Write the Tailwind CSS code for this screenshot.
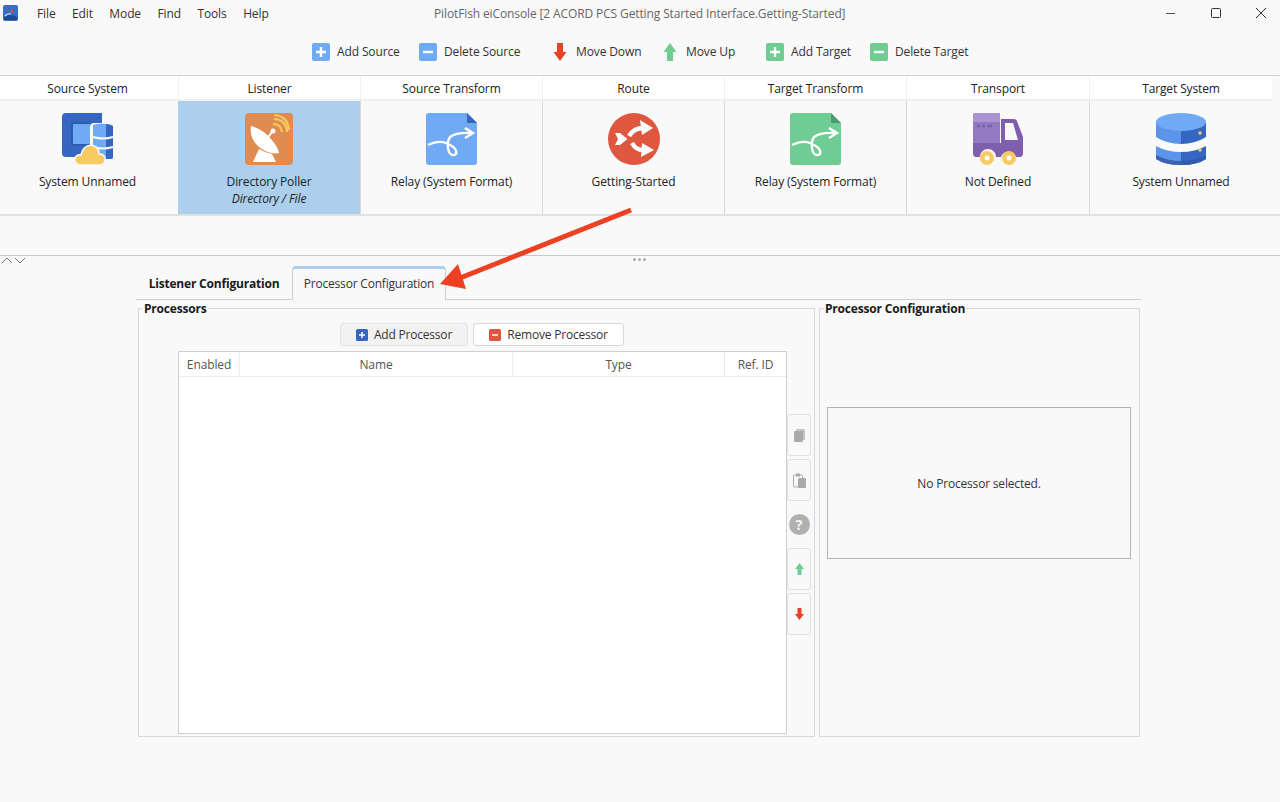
<!DOCTYPE html>
<html lang="en">
<head>
  <meta charset="UTF-8">
  <title>PilotFish eiConsole</title>
  <script src="https://cdn.jsdelivr.net/npm/@tailwindcss/browser@4"></script>
</head>
<body class="relative h-[802px] w-[1280px] overflow-hidden bg-[#f9f9f9] font-['Open_Sans','Noto_Sans',sans-serif] text-[12px] tracking-[-0.12px] text-[#222]">

  <!-- title bar -->
  <div class="relative flex h-[26px] items-center">
    <svg class="ml-[3px] h-[16px] w-[15px]" viewBox="0 0 15 16">
      <rect width="15" height="16" rx="2" fill="#3a6ec0"/>
      <path d="M1 12 Q7 8 14 12 V15 H1 Z" fill="#1f4a96"/>
      <path d="M2 11 Q5 8 8 9" stroke="#d8e6f8" stroke-width="1.2" fill="none"/>
      <path d="M8 3 L11 7 L8 8 Z" fill="#d9503f"/>
    </svg>
    <nav class="ml-[19px] flex gap-[16.5px] pt-[1px] text-[#333]">
      <span>File</span><span>Edit</span><span>Mode</span><span>Find</span><span>Tools</span><span>Help</span>
    </nav>
    <div class="absolute left-[434px] w-[410px] whitespace-nowrap pt-[1px] text-center text-[#666]">PilotFish eiConsole [2 ACORD PCS Getting Started Interface.Getting-Started]</div>
    <div class="ml-auto mr-[13px] flex items-center gap-[33px]">
      <svg class="h-[12px] w-[12px]" viewBox="0 0 12 12"><path d="M1 6.5H10" stroke="#555" stroke-width="1"/></svg>
      <svg class="h-[12px] w-[12px]" viewBox="0 0 12 12"><rect x="1.5" y="1.5" width="9" height="9" rx="1" stroke="#333" fill="none"/></svg>
      <svg class="h-[12px] w-[12px]" viewBox="0 0 12 12"><path d="M1 1L11 11M11 1L1 11" stroke="#333" stroke-width="1"/></svg>
    </div>
  </div>

  <!-- toolbar -->
  <div class="flex h-[49px] items-center pl-[312px] pt-[3px] text-[#333]">
    <div class="flex w-[107px] items-center gap-[7px]">
      <svg class="h-[18px] w-[18px]" viewBox="0 0 18 18"><rect width="18" height="18" rx="2" fill="#70aaf5"/><path d="M9 4V14M4 9H14" stroke="#fff" stroke-width="2.4"/></svg>
      <span>Add Source</span>
    </div>
    <div class="flex w-[134px] items-center gap-[7px]">
      <svg class="h-[18px] w-[18px]" viewBox="0 0 18 18"><rect width="18" height="18" rx="2" fill="#70aaf5"/><path d="M4 9H14" stroke="#fff" stroke-width="2.4"/></svg>
      <span>Delete Source</span>
    </div>
    <div class="flex w-[110px] items-center gap-[9px]">
      <svg class="h-[18px] w-[14px]" viewBox="0 0 14 18"><path d="M4 0.5Q4 0 4.5 0H9.5Q10 0 10 0.5V9H13.5L7 18L0.5 9H4Z" fill="#e8412a"/></svg>
      <span>Move Down</span>
    </div>
    <div class="flex w-[103px] items-center gap-[9px]">
      <svg class="h-[18px] w-[14px]" viewBox="0 0 14 18"><path d="M4 17.5Q4 18 4.5 18H9.5Q10 18 10 17.5V9H13.5L7 0L0.5 9H4Z" fill="#6fcc92"/></svg>
      <span>Move Up</span>
    </div>
    <div class="flex w-[104px] items-center gap-[7px]">
      <svg class="h-[18px] w-[18px]" viewBox="0 0 18 18"><rect width="18" height="18" rx="2" fill="#6fcc92"/><path d="M9 4V14M4 9H14" stroke="#fff" stroke-width="2.4"/></svg>
      <span>Add Target</span>
    </div>
    <div class="flex items-center gap-[7px]">
      <svg class="h-[18px] w-[18px]" viewBox="0 0 18 18"><rect width="18" height="18" rx="2" fill="#6fcc92"/><path d="M4 9H14" stroke="#fff" stroke-width="2.4"/></svg>
      <span>Delete Target</span>
    </div>
  </div>

  <!-- stage grid -->
  <div class="w-[1280px] border-t border-[#d0d0d0]">
    <div class="grid w-[1272px] grid-cols-[178px_182px_182px_182px_182px_183px_183px]">
      <div class="flex h-[25px] items-center justify-center border-b-2 border-[#f0f0f0] bg-white pr-[3px] pt-[2px]">Source System</div>
      <div class="flex h-[25px] items-center justify-center border-b-2 border-l border-[#f0f0f0] bg-white pt-[2px]">Listener</div>
      <div class="flex h-[25px] items-center justify-center border-b-2 border-l border-[#f0f0f0] bg-white pt-[2px]">Source Transform</div>
      <div class="flex h-[25px] items-center justify-center border-b-2 border-l border-[#f0f0f0] bg-white pt-[2px]">Route</div>
      <div class="flex h-[25px] items-center justify-center border-b-2 border-l border-[#f0f0f0] bg-white pt-[2px]">Target Transform</div>
      <div class="flex h-[25px] items-center justify-center border-b-2 border-l border-[#f0f0f0] bg-white pt-[2px]">Transport</div>
      <div class="flex h-[25px] items-center justify-center border-b-2 border-l border-[#f0f0f0] bg-white pt-[2px]">Target System</div>

      <div class="flex h-[113px] flex-col items-center pr-[3px] pt-[12px]">
        <svg class="h-[52px] w-[52px]" viewBox="0 0 52 52">
          <path d="M4 0H40V10H32Q28 10 28 14V34L14 44H4Q0 44 0 40V4Q0 0 4 0Z" fill="#3567c2"/>
          <rect x="9" y="9" width="19" height="24" rx="2" fill="#2e5cae"/>
          <rect x="11" y="11" width="17" height="20" rx="1" fill="#70aaf5"/>
          <path d="M31 12Q41 9 51 13V44Q51 46 49 46H31Z" fill="#70aaf5"/>
          <path d="M44 11Q48 11 51 13V44Q51 46 49 46H44Z" fill="#3567c2"/>
          <path d="M31 24Q41 27 51 24M31 34Q41 37 51 34" stroke="#f9f9f9" stroke-width="2" fill="none"/>
          <path d="M18 52Q12 51 13 45Q15 41 19 42Q21 32 30 32Q37 34 37 41Q43 41 43 46Q43 52 38 52Z" fill="#f7cb60" stroke="#f9f9f9" stroke-width="1.5"/>
        </svg>
        <div class="mt-[8px] leading-[17px]">System Unnamed</div>
      </div>
      <div class="flex h-[113px] flex-col items-center bg-[#abcfec] pt-[12px]">
        <svg class="h-[52px] w-[48px]" viewBox="0 0 48 52">
          <rect width="48" height="52" rx="4" fill="#e08b52"/>
          <path d="M6 13Q18 16 26 26Q33 34 34 40Q24 42 14 34Q4 25 6 13Z" fill="#fff"/>
          <path d="M21 27L27 19" stroke="#fff" stroke-width="2"/>
          <circle cx="28" cy="18" r="2.5" fill="#fff"/>
          <path d="M28 11Q36 11 37 19M29 6Q41 6 42 19M29 2Q43 3 44 17" stroke="#f7cb60" stroke-width="2.2" fill="none"/>
          <path d="M14 36L20 39L27 41L31 49H8Z" fill="#fff"/>
        </svg>
        <div class="mt-[8px] leading-[17px]">Directory Poller</div>
        <div class="italic leading-[17px]">Directory / File</div>
      </div>
      <div class="flex h-[113px] flex-col items-center border-l border-[#d8d8d8] pt-[12px]">
        <svg class="h-[52px] w-[52px]" viewBox="0 0 52 52">
          <path d="M3 0H41L51 10V49Q51 52 48 52H3Q0 52 0 49V3Q0 0 3 0Z" fill="#70aaf5"/>
          <path d="M41 0L51 10H41Z" fill="#3567c2"/>
          <path d="M2 32Q12 27 20 30Q32 35 30 41Q26 44 23 39Q20 30 24 24Q30 19 46 20M39 15L47 20L39 25" stroke="#fff" stroke-width="2.4" fill="none"/>
        </svg>
        <div class="mt-[8px] leading-[17px]">Relay (System Format)</div>
      </div>
      <div class="flex h-[113px] flex-col items-center border-l border-[#d8d8d8] pt-[12px]">
        <svg class="h-[52px] w-[52px]" viewBox="0 0 52 52">
          <circle cx="26" cy="26" r="26" fill="#df573e"/>
          <path d="M7 20H12L19 25.500V26.500L12 32H7L10 26Z" fill="#fff"/>
          <path d="M21 23Q26 15 35 15" stroke="#fff" stroke-width="4.500" fill="none"/>
          <path d="M32 7L45 15L34 22Z" fill="#fff"/>
          <path d="M24 30Q28 37 35 37" stroke="#fff" stroke-width="4.500" fill="none"/>
          <path d="M34 30L46 37L33 44Z" fill="#fff"/>
        </svg>
        <div class="mt-[8px] leading-[17px]">Getting-Started</div>
      </div>
      <div class="flex h-[113px] flex-col items-center border-l border-[#d8d8d8] pt-[12px]">
        <svg class="h-[52px] w-[52px]" viewBox="0 0 52 52">
          <path d="M3 0H41L51 10V49Q51 52 48 52H3Q0 52 0 49V3Q0 0 3 0Z" fill="#6fcc92"/>
          <path d="M41 0L51 10H41Z" fill="#4f9c70"/>
          <path d="M2 32Q12 27 20 30Q32 35 30 41Q26 44 23 39Q20 30 24 24Q30 19 46 20M39 15L47 20L39 25" stroke="#fff" stroke-width="2.4" fill="none"/>
        </svg>
        <div class="mt-[8px] leading-[17px]">Relay (System Format)</div>
      </div>
      <div class="flex h-[113px] flex-col items-center border-l border-[#d8d8d8] pt-[12px]">
        <svg class="h-[52px] w-[52px]" viewBox="0 0 52 52">
          <path d="M3 0H28V30H1V3Q1 0 3 0Z" fill="#9379bf"/>
          <path d="M3 0H28V9H1V3Q1 0 3 0Z" fill="#a993d0"/>
          <path d="M5 13H8M10 13H13M15.500 13H20" stroke="#7e5fae" stroke-width="2.5"/>
          <path d="M29 6H42Q44 6 45 8L51 24V40Q51 44 48 44H44A8 8 0 0 0 29 44H24A8 8 0 0 0 8 44H4Q1 44 1 40V30H29Z" fill="#7e5fae"/>
          <path d="M33 10H41L46 27H33Z" fill="#f9f9f9"/>
          <circle cx="15" cy="45" r="7" fill="#f7cb60"/><circle cx="15" cy="45" r="2.500" fill="#f9f9f9"/>
          <circle cx="37" cy="45" r="7" fill="#f7cb60"/><circle cx="37" cy="45" r="2.500" fill="#f9f9f9"/>
        </svg>
        <div class="mt-[8px] leading-[17px]">Not Defined</div>
      </div>
      <div class="flex h-[113px] flex-col items-center border-l border-[#d8d8d8] pt-[12px]">
        <svg class="h-[52px] w-[52px]" viewBox="0 0 52 52">
          <path d="M1 9V24Q12 31 26 31V9Z" fill="#5b94e8"/>
          <path d="M26 9H51V24Q40 31 26 31Z" fill="#3567c2"/>
          <ellipse cx="26" cy="9" rx="25" ry="9" fill="#70aaf5"/>
          <path d="M1 33Q12 39 26 39V52Q10 52 1 46Z" fill="#5b94e8"/>
          <path d="M51 33Q40 39 26 39V52Q42 52 51 46Z" fill="#3567c2"/>
          <path d="M1 42Q12 48 26 48V52Q10 52 1 46Z" fill="#3a62b0"/>
          <path d="M51 42Q40 48 26 48V52Q42 52 51 46Z" fill="#2e5cae"/>
          <circle cx="45" cy="20" r="1.700" fill="#f7cb60"/><circle cx="45" cy="37" r="1.700" fill="#f7cb60"/>
        </svg>
        <div class="mt-[8px] leading-[17px]">System Unnamed</div>
      </div>
    </div>
  </div>

  <!-- empty strip, splitter -->
  <div class="relative h-[41px] border-t-2 border-[#e0e0e0]"></div>
  <div class="relative h-[11px] border-t border-[#c8c8c8]">
    <svg class="absolute left-[1px] top-[1px] h-[7px] w-[25px]" viewBox="0 0 25 7">
      <path d="M1 6L6 1L11 6M14 1L19 6L24 1" stroke="#777" stroke-width="1" fill="none"/>
    </svg>
    <div class="absolute left-[633px] top-[2px] flex gap-[2px]">
      <span class="h-[3px] w-[3px] rounded-full bg-[#aaa]"></span><span class="h-[3px] w-[3px] rounded-full bg-[#aaa]"></span><span class="h-[3px] w-[3px] rounded-full bg-[#aaa]"></span>
    </div>
  </div>

  <!-- tabs -->
  <div class="ml-[136px] flex h-[34px] w-[1005px] items-stretch border-b border-[#cfcfcf]">
    <div class="flex w-[156px] items-center justify-center pt-[2px] font-bold tracking-[-0.2px] text-[#1a1a1a]">Listener Configuration</div>
    <div class="-mb-[1px] flex w-[154px] items-center justify-center rounded-t-[4px] border-x border-[#cfcfcf] border-t-[3px] border-t-[#abcfec] bg-[#f9f9f9] pb-[2px] tracking-[-0.2px] text-[#333]">Processor Configuration</div>
  </div>

  <!-- panels -->
  <div class="ml-[138px] mt-[8px] flex gap-[4px]">
    <div class="relative h-[429px] w-[677px] border border-[#d8d8d8] pl-[39px] pt-[14px]">
      <div class="absolute -top-[7px] left-[4px] bg-[#f9f9f9] px-[1px] font-bold leading-[14px] tracking-[-0.18px] text-[#1a1a1a]">Processors</div>
      <div class="flex gap-[5px] pl-[162px] tracking-[-0.2px]">
        <button class="flex h-[23px] w-[128px] items-center justify-center gap-[6px] rounded-[3px] border border-[#e4e4e4] bg-[#f2f2f2] pt-[1px] text-[#333]">
          <svg class="h-[12px] w-[12px]" viewBox="0 0 12 12"><rect width="12" height="12" rx="1.500" fill="#3567c2"/><path d="M6 3V9M3 6H9" stroke="#fff" stroke-width="1.500"/></svg>
          Add Processor
        </button>
        <button class="flex h-[23px] w-[151px] items-center justify-center gap-[6px] rounded-[3px] border border-[#d8d8d8] bg-white pt-[1px] text-[#333]">
          <svg class="h-[12px] w-[12px]" viewBox="0 0 12 12"><rect width="12" height="12" rx="1.500" fill="#df573e"/><path d="M3 6H9" stroke="#fff" stroke-width="1.500"/></svg>
          Remove Processor
        </button>
      </div>
      <div class="mt-[5px] flex">
        <div class="h-[383px] w-[609px] border border-[#cfcfcf] bg-white">
          <div class="grid h-[25px] grid-cols-[60px_273px_212px_1fr] border-b border-[#ececec] text-[#555]">
            <div class="flex items-center justify-center pt-[1px]">Enabled</div>
            <div class="flex items-center justify-center border-l border-[#ececec] pt-[1px]">Name</div>
            <div class="flex items-center justify-center border-l border-[#ececec] pt-[1px]">Type</div>
            <div class="flex items-center justify-center border-l border-[#ececec] pt-[1px]">Ref. ID</div>
          </div>
        </div>
        <div class="flex flex-col items-center gap-[3px] pt-[63px]">
          <div class="flex h-[42px] w-[24px] items-center justify-center rounded-[3px] border border-[#e0e0e0]">
            <svg class="h-[13px] w-[11px]" viewBox="0 0 11 13"><rect x="2" width="9" height="11" rx="1" fill="#c4c4c4"/><rect y="2" width="9" height="11" rx="1" fill="#aaa"/></svg>
          </div>
          <div class="flex h-[42px] w-[24px] items-center justify-center rounded-[3px] border border-[#e0e0e0]">
            <svg class="h-[15px] w-[13px]" viewBox="0 0 13 15"><rect x="0.500" y="2" width="9" height="12" rx="1" stroke="#aaa" fill="none"/><rect x="3" y="0.500" width="4" height="3" fill="#aaa"/><rect x="5" y="5" width="8" height="10" rx="1" fill="#aaa"/></svg>
          </div>
          <div class="my-[10px] flex h-[21px] w-[21px] items-center justify-center rounded-full bg-[#b0b0b0] text-[15px] font-bold leading-none text-[#f4f4f4]">?</div>
          <div class="flex h-[42px] w-[24px] items-center justify-center rounded-[3px] border border-[#e0e0e0]">
            <svg class="h-[12px] w-[9px]" viewBox="0 0 9 12"><path d="M2.500 12V6H0L4.500 0L9 6H6.500V12Z" fill="#6fcc92"/></svg>
          </div>
          <div class="flex h-[42px] w-[24px] items-center justify-center rounded-[3px] border border-[#e0e0e0]">
            <svg class="h-[12px] w-[9px]" viewBox="0 0 9 12"><path d="M2.500 0V6H0L4.500 12L9 6H6.500V0Z" fill="#e8412a"/></svg>
          </div>
        </div>
      </div>
    </div>
    <div class="relative h-[429px] w-[321px] border border-[#d8d8d8] pl-[7px] pt-[98px]">
      <div class="absolute -top-[7px] left-[4px] bg-[#f9f9f9] px-[1px] font-bold leading-[14px] tracking-[-0.18px] text-[#1a1a1a]">Processor Configuration</div>
      <div class="flex h-[152px] w-[304px] items-center justify-center border border-[#b4b4b4] pt-[2px] tracking-[-0.18px] text-[#333]">No Processor selected.</div>
    </div>
  </div>

  <!-- red callout arrow over the page -->
  <svg class="pointer-events-none absolute left-0 top-0 h-[802px] w-[1280px]" viewBox="0 0 1280 802">
    <path d="M631 210L455 280" stroke="#ee4023" stroke-width="5" fill="none"/>
    <path d="M440 284L458 264L466 289Z" fill="#ee4023"/>
  </svg>
</body>
</html>
